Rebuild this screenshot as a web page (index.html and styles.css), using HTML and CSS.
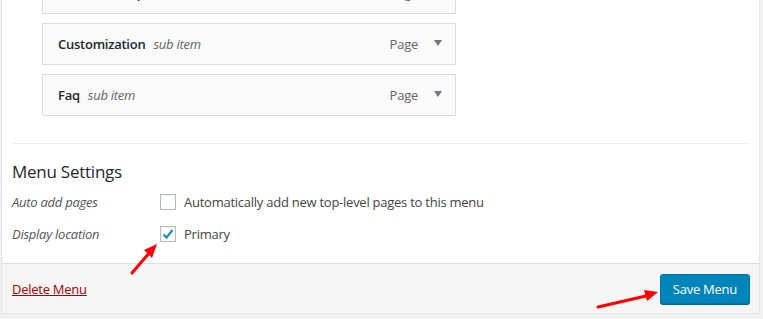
FILE: index.html
```html
<!DOCTYPE html>
<html lang="en">
<head>
    <meta charset="UTF-8">
    <title>Menus</title>
    <link rel="stylesheet" href="styles.css">
</head>
<body>
    <div class="panel">
        <div class="panel-body">
            <ul class="menu-items">
                <li class="menu-item">
                    <span class="item-title">Website Setup</span>
                    <span class="item-note">sub item</span>
                    <span class="item-type">Page</span>
                    <span class="item-arrow"></span>
                </li>
                <li class="menu-item">
                    <span class="item-title">Customization</span>
                    <span class="item-note">sub item</span>
                    <span class="item-type">Page</span>
                    <span class="item-arrow"></span>
                </li>
                <li class="menu-item">
                    <span class="item-title">Faq</span>
                    <span class="item-note">sub item</span>
                    <span class="item-type">Page</span>
                    <span class="item-arrow"></span>
                </li>
            </ul>

            <div class="menu-settings">
                <h3>Menu Settings</h3>
                <div class="setting-row">
                    <span class="setting-label">Auto add pages</span>
                    <label class="setting-field">
                        <span class="checkbox"></span>
                        Automatically add new top-level pages to this menu
                    </label>
                </div>
                <div class="setting-row">
                    <span class="setting-label">Display location</span>
                    <label class="setting-field">
                        <span class="checkbox checked">
                            <svg width="14" height="14" viewBox="0 0 14 14">
                                <path d="M2.5 7.5 L5.5 10.5 L11.5 3" fill="none" stroke="#1e8cbe" stroke-width="2.2"/>
                            </svg>
                        </span>
                        Primary
                    </label>
                </div>
            </div>
        </div>

        <div class="panel-footer">
            <a href="#" class="delete-link">Delete Menu</a>
            <button class="save-btn">Save Menu</button>
        </div>
    </div>

    <!-- annotation arrows drawn over the screenshot -->
    <svg class="annotations" width="763" height="319" viewBox="0 0 763 319">
        <line x1="132" y1="273" x2="150" y2="252" stroke="#f00" stroke-width="3" stroke-linecap="round"/>
        <polygon points="157,244 144,250 152,258" fill="#f00"/>
        <line x1="598" y1="307" x2="646" y2="296" stroke="#f00" stroke-width="3" stroke-linecap="round"/>
        <polygon points="658,292 644,290 647,301" fill="#f00"/>
    </svg>
</body>
</html>
```

FILE: styles.css
```css
body {
    margin: 0;
    padding: 0 3px 0 1px;
    background: #f1f1f1;
    font-family: "Open Sans", "Noto Sans", sans-serif;
    font-size: 13px;
    letter-spacing: -0.25px;
    color: #444;
    overflow: hidden;
    height: 319px;
}
.panel {
    background: #fff;
    border: 1px solid #e5e5e5;
    border-top: none;
}
.panel-body {
    padding: 0 10px 13px;
}

/* menu items */
.menu-items {
    list-style: none;
    margin: -28px 0 0 30px;
    padding: 0;
}
.menu-item {
    box-sizing: border-box;
    display: flex;
    align-items: center;
    width: 414px;
    height: 42px;
    margin-bottom: 9px;
    padding: 0 13px 0 15px;
    background: #fafafa;
    border: 1px solid #dcdcdc;
}
.menu-item:last-child {
    margin-bottom: 0;
}
.item-title {
    font-weight: 600;
    color: #23282d;
}
.item-note {
    margin-left: 8px;
    font-style: italic;
    color: #666;
}
.item-type {
    margin-left: auto;
    color: #666;
}
.item-arrow {
    width: 0;
    height: 0;
    margin-left: 16px;
    margin-top: -2px;
    border-left: 4px solid transparent;
    border-right: 4px solid transparent;
    border-top: 6px solid #72777c;
}

/* settings */
.menu-settings {
    margin-top: 27px;
    border-top: 1px solid #eee;
    padding-top: 16px;
}
.menu-settings h3 {
    margin: 0 0 2px;
    font-size: 17px;
    line-height: 24px;
    font-weight: 400;
    color: #23282d;
}
.setting-row {
    display: flex;
    align-items: center;
    height: 32px;
}
.setting-label {
    width: 148px;
    font-style: italic;
    color: #555;
}
.setting-field {
    display: flex;
    align-items: center;
    gap: 8px;
    color: #444;
}
.checkbox {
    box-sizing: border-box;
    display: flex;
    align-items: center;
    justify-content: center;
    width: 16px;
    height: 16px;
    border: 1px solid #b4b9be;
    background: #fff;
    box-shadow: inset 0 1px 2px rgba(0, 0, 0, .07);
}

/* footer */
.panel-footer {
    display: flex;
    align-items: center;
    justify-content: space-between;
    padding: 10px 9px 9px 10px;
    background: #f5f5f5;
    border-top: 1px solid #ddd;
}
.delete-link {
    color: #a00;
    text-decoration: underline;
}
.save-btn {
    height: 30px;
    padding: 0 12px 1px;
    font-family: inherit;
    font-size: 13px;
    letter-spacing: -0.25px;
    color: #fff;
    background: #0085ba;
    border: 1px solid #0073aa;
    border-radius: 3px;
    box-shadow: 0 1px 0 #006799;
}

.annotations {
    position: absolute;
    left: 0;
    top: 0;
    pointer-events: none;
}
```
